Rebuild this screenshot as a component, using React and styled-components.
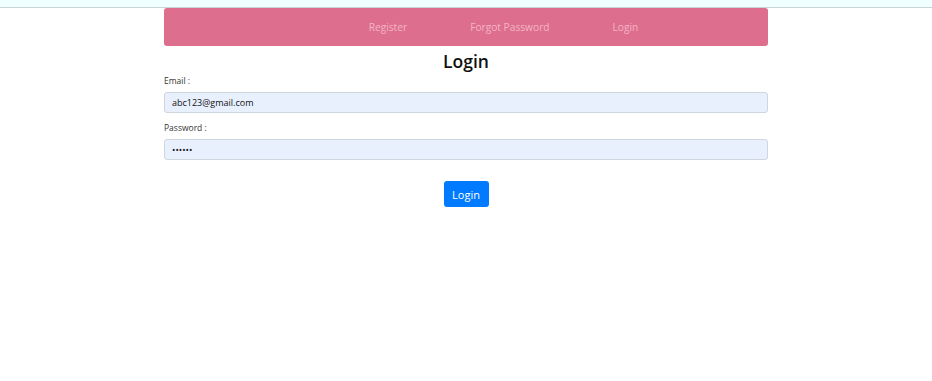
import React from "react";
import styled, { createGlobalStyle } from "styled-components";

const GlobalStyle = createGlobalStyle`
  body {
    margin: 0;
    background: #fff;
    font-family: "Open Sans", "Noto Sans", sans-serif;
    color: #212529;
  }
`;

const TopStrip = styled.div`
  height: 7px;
  background: #f0ffff;
  border-bottom: 1px solid #c9d3d6;
`;

const Container = styled.div`
  width: 604px;
  margin: 0 auto;
`;

const NavBar = styled.nav`
  height: 38px;
  background: #dd6e8e;
  border-radius: 3px;
  display: flex;
  align-items: center;
  justify-content: center;
  gap: 63px;
  padding-left: 75px;
  box-sizing: border-box;
`;

const NavLink = styled.a`
  color: #f4b5c8;
  font-size: 10.2px;
  text-decoration: none;
`;

const Title = styled.h2`
  margin: 3px 0 0;
  text-align: center;
  font-size: 17.5px;
  font-weight: 600;
  line-height: 24px;
  color: #111;
`;

const Field = styled.div`
  display: flex;
  flex-direction: column;
  margin-top: ${(p) => p.$top}px;
`;

const Label = styled.label`
  font-size: 8.5px;
  line-height: 12px;
  color: #333;
  margin-bottom: 5px;
`;

const Input = styled.input`
  height: 21px;
  box-sizing: border-box;
  border: 1px solid #cfd6de;
  border-radius: 3px;
  background: #e8f0fe;
  padding: 0 7px;
  font-family: inherit;
  font-size: 9px;
  color: #111;
  outline: none;
`;

const ButtonRow = styled.div`
  display: flex;
  justify-content: center;
  margin-top: 21px;
`;

const Button = styled.button`
  width: 45px;
  height: 26px;
  border: none;
  border-radius: 3px;
  background: #007bff;
  color: #fff;
  font-family: inherit;
  font-size: 11px;
  cursor: pointer;
`;

export default function App() {
  return (
    <>
      <GlobalStyle />
      <TopStrip />
      <Container>
        <NavBar>
          <NavLink href="#">Register</NavLink>
          <NavLink href="#">Forgot Password</NavLink>
          <NavLink href="#">Login</NavLink>
        </NavBar>
        <Title>Login</Title>
        <Field $top={2}>
          <Label>Email :</Label>
          <Input type="text" defaultValue="abc123@gmail.com" />
        </Field>
        <Field $top={9}>
          <Label>Password :</Label>
          <Input type="password" defaultValue="123456" />
        </Field>
        <ButtonRow>
          <Button>Login</Button>
        </ButtonRow>
      </Container>
    </>
  );
}
